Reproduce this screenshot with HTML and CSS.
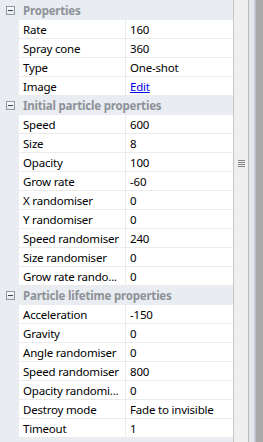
FILE: index.html
```
<!DOCTYPE html>
<html>
<head>
<meta charset="utf-8">
<link rel="stylesheet" href="styles.css">
</head>
<body>
<div class="panel">
  <div class="grid">
    <div class="cat"><span class="toggle"></span><span class="cat-label">Properties</span></div>
    <div class="row"><div class="name">Rate</div><div class="val">160</div></div>
    <div class="row"><div class="name">Spray cone</div><div class="val">360</div></div>
    <div class="row"><div class="name">Type</div><div class="val">One-shot</div></div>
    <div class="row"><div class="name">Image</div><div class="val"><a class="link">Edit</a></div></div>
    <div class="cat"><span class="toggle"></span><span class="cat-label">Initial particle properties</span></div>
    <div class="row"><div class="name">Speed</div><div class="val">600</div></div>
    <div class="row"><div class="name">Size</div><div class="val">8</div></div>
    <div class="row"><div class="name">Opacity</div><div class="val">100</div></div>
    <div class="row"><div class="name">Grow rate</div><div class="val">-60</div></div>
    <div class="row"><div class="name">X randomiser</div><div class="val">0</div></div>
    <div class="row"><div class="name">Y randomiser</div><div class="val">0</div></div>
    <div class="row"><div class="name">Speed randomiser</div><div class="val">240</div></div>
    <div class="row"><div class="name">Size randomiser</div><div class="val">0</div></div>
    <div class="row"><div class="name">Grow rate rando...</div><div class="val">0</div></div>
    <div class="cat"><span class="toggle"></span><span class="cat-label">Particle lifetime properties</span></div>
    <div class="row"><div class="name">Acceleration</div><div class="val">-150</div></div>
    <div class="row"><div class="name">Gravity</div><div class="val">0</div></div>
    <div class="row"><div class="name">Angle randomiser</div><div class="val">0</div></div>
    <div class="row"><div class="name">Speed randomiser</div><div class="val">800</div></div>
    <div class="row"><div class="name">Opacity randomi...</div><div class="val">0</div></div>
    <div class="row"><div class="name">Destroy mode</div><div class="val">Fade to invisible</div></div>
    <div class="row"><div class="name">Timeout</div><div class="val">1</div></div>
  </div>
  <div class="scroll">
    <div class="thumb"><span class="grip"></span></div>
  </div>
  <div class="splitter"></div>
  <div class="edge"></div>
</div>
</body>
</html>
```
FILE: styles.css
```
html, body {
  margin: 0;
  padding: 0;
  width: 263px;
  height: 442px;
  overflow: hidden;
  background: #e9ecf0;
  font-family: "Noto Sans", "Open Sans", sans-serif;
  font-size: 11.5px;
  letter-spacing: -0.2px;
  color: #000;
}
.panel {
  display: flex;
  height: 442px;
}
.grid {
  width: 233px;
  padding-top: 1px;
  background: #e9ecf0;
  border-right: 1px solid #c6c8cc;
  display: flex;
  flex-direction: column;
}
.cat {
  height: 19px;
  display: flex;
  align-items: center;
  background: #e9ecf0;
}
.toggle {
  box-sizing: border-box;
  width: 9px;
  height: 9px;
  margin-left: 6px;
  margin-right: 8px;
  border: 1px solid #8f99a4;
  background: linear-gradient(#fbfbfc, #e4e7ea);
  display: flex;
  align-items: center;
  justify-content: center;
}
.toggle::after {
  content: "";
  width: 5px;
  height: 1px;
  background: #3a4550;
}
.cat-label {
  font-weight: bold;
  color: #8d9298;
  white-space: nowrap;
}
.row {
  height: 19px;
  box-sizing: border-box;
  margin-left: 19px;
  display: flex;
  background: #fff;
  border-bottom: 1px solid #ebebeb;
}
.name {
  width: 107px;
  box-sizing: border-box;
  padding-left: 4px;
  border-right: 1px solid #ebebeb;
  display: flex;
  align-items: center;
  white-space: nowrap;
  overflow: hidden;
}
.val {
  flex: 1;
  padding-left: 4px;
  display: flex;
  align-items: center;
  white-space: nowrap;
}
.link {
  color: #0000ee;
  text-decoration: underline;
}
.scroll {
  width: 14px;
  background: #efefef;
  border-right: 1px solid #bcbcbc;
  display: flex;
  flex-direction: column;
}
.thumb {
  flex: 1;
  display: flex;
  justify-content: center;
  padding-top: 160px;
}
.grip {
  width: 7px;
  height: 7px;
  background: repeating-linear-gradient(#858585 0 1px, transparent 1px 2px);
}
.splitter {
  width: 5px;
  background: #e6e7ea;
  border-right: 1px solid #c9d4e6;
}
.edge {
  flex: 1;
  background: #a9a9a9;
  border-left: 1px solid #bdbdbd;
}
```
